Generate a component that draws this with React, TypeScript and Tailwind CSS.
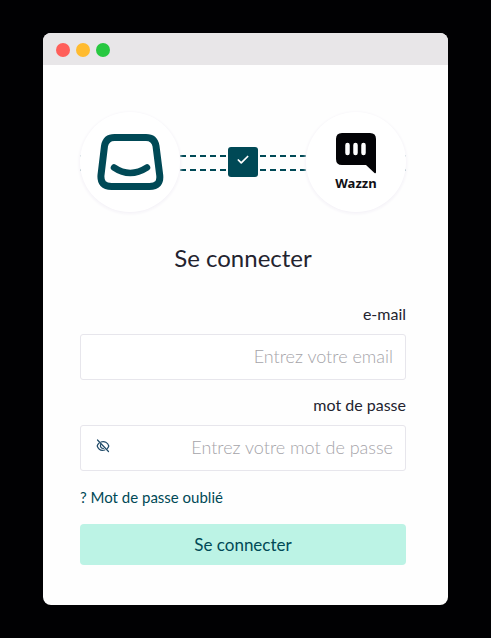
import { Check } from "lucide-react";

const dots = ["bg-[#ff5f5a]", "bg-[#ffbb2f]", "bg-[#28c840]"];

function TitleBar() {
  return (
    <div className="flex h-8 items-center gap-[6px] bg-[#e8e6e8] px-[13px] pt-[2px]">
      {dots.map((color) => (
        <span key={color} className={`size-[14px] rounded-full ${color}`} />
      ))}
    </div>
  );
}

function InboxLogo() {
  return (
    <svg viewBox="0 0 68 58" className="h-[58px] w-[68px]" fill="none" stroke="#004956">
      <path
        d="M18.500 4.500H50Q58.500 4.500 60 13L63.700 42Q65 53.500 53.500 53.500H15.500Q4 53.500 5 42L8.500 13Q10 4.500 18.500 4.500Z"
        strokeWidth="7"
        strokeLinejoin="round"
      />
      <path d="M18 34.500Q34 45.500 51 34.500" strokeWidth="6.500" strokeLinecap="round" />
    </svg>
  );
}

function WazznLogo() {
  return (
    <div className="flex flex-col items-center">
      <svg viewBox="0 0 42 42" className="size-[42px]">
        <path
          d="M7 1H35Q41 1 41 7V40Q41 41.800 39.500 41L31 33H7Q1 33 1 27V7Q1 1 7 1Z"
          fill="#030306"
        />
        <path d="M12.500 13V21M20.500 13V21M28.500 13V21" stroke="#fff" strokeWidth="4.500" strokeLinecap="round" />
      </svg>
      <span className="font-['Noto_Sans',sans-serif] text-[13px] leading-[18px] font-bold text-[#101014]">
        Wazzn
      </span>
    </div>
  );
}

function Connection() {
  return (
    <div className="relative flex items-center justify-between">
      <div className="absolute inset-x-0 top-[43px] flex flex-col gap-3">
        <div className="h-[2px] bg-[repeating-linear-gradient(to_right,#004956_0_6px,transparent_6px_10px)]" />
        <div className="h-[2px] bg-[repeating-linear-gradient(to_right,#004956_0_6px,transparent_6px_10px)]" />
      </div>
      <div className="relative flex size-[100px] items-center justify-center rounded-full bg-white shadow-[0_1px_3px_1px_#f5f3f8]">
        <InboxLogo />
      </div>
      <div className="relative flex size-[30px] items-center justify-center rounded-[3px] bg-[#004956] pb-1">
        <Check className="size-[14px] text-white" strokeWidth={3} />
      </div>
      <div className="relative flex size-[100px] items-center justify-center rounded-full bg-white shadow-[0_1px_3px_1px_#f5f3f8]">
        <WazznLogo />
      </div>
    </div>
  );
}

function HiddenEye() {
  return (
    <svg viewBox="0 0 14 14" className="size-[14px]" fill="none" stroke="#1f4a68" strokeWidth="1.200" strokeLinecap="round">
      <path d="M1.500 1L12.500 12.500" />
      <path d="M5 3C8.500 1.800 11.800 3.600 12.800 7C12.500 8 12 8.900 11.300 9.600" />
      <path d="M3 4.200C2.100 4.900 1.500 5.900 1.200 7C2.500 10.600 5.500 12 8.800 11" />
      <path d="M4.500 5.600C4 7.700 5.300 9.400 7.400 9.500" />
    </svg>
  );
}

const labelClass = "text-right text-base leading-5 text-[#23232f]";
const inputClass =
  "h-[46px] w-full rounded-[3px] border border-[#e7e6ec] bg-white px-3 pb-[2px] text-right text-lg font-light text-[#23232f] outline-none placeholder:text-[#a5a4a9]";

export default function App() {
  return (
    <div className="min-h-screen bg-[#010103] px-[43px] py-[33px] font-['Lato',sans-serif]">
      <main className="overflow-hidden rounded-lg bg-[#fefefe]">
        <TitleBar />
        <form className="flex flex-col pt-[47px] pr-[42px] pb-10 pl-[37px]" onSubmit={(e) => e.preventDefault()}>
          <Connection />
          <h1 className="mt-[30px] text-center text-2xl leading-8 text-[#23232f]">Se connecter</h1>

          <label htmlFor="email" className={`mt-[30px] ${labelClass}`}>
            e-mail
          </label>
          <input id="email" type="email" placeholder="Entrez votre email" className={`mt-[10px] ${inputClass}`} />

          <label htmlFor="password" className={`mt-[15px] ${labelClass}`}>
            mot de passe
          </label>
          <div className="relative mt-[10px]">
            <input id="password" type="password" placeholder="Entrez votre mot de passe" className={inputClass} />
            <button type="button" aria-label="Afficher le mot de passe" className="absolute top-[14px] left-4">
              <HiddenEye />
            </button>
          </div>

          <a href="#" className="mt-4 self-start text-[15px] leading-5 text-[#004956]">
            ? Mot de passe oublié
          </a>
          <button type="submit" className="mt-[17px] h-[41px] rounded-[4px] bg-[#bcf3e5] text-[17px] text-[#004956]">
            Se connecter
          </button>
        </form>
      </main>
    </div>
  );
}
